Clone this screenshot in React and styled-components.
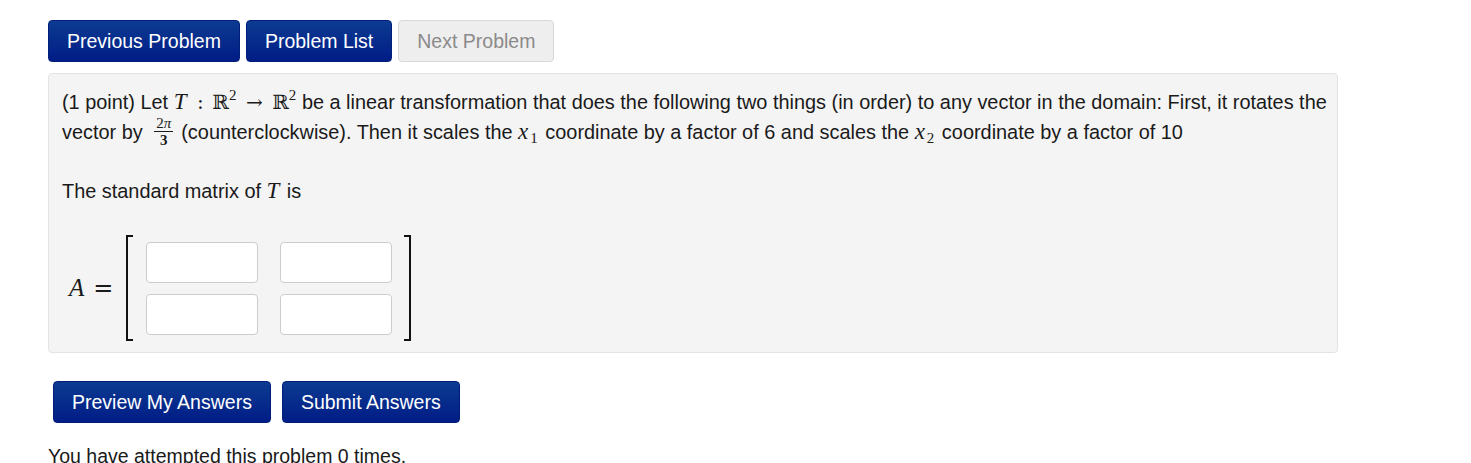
import styled, { createGlobalStyle, css } from 'styled-components'

const GlobalStyle = createGlobalStyle`
  body {
    margin: 0;
    background: #fff;
    font-family: 'Liberation Sans', Arial, sans-serif;
    color: #1a1a1a;
  }
`

const Page = styled.div`
  padding: 20px 0 0 48px;
  height: 463px;
  box-sizing: border-box;
  overflow: hidden;
`

const NavBar = styled.div`
  display: flex;
  gap: 6px;
  margin-bottom: 11px;
`

const Button = styled.button`
  height: 42px;
  padding: 0 18px;
  border-radius: 4px;
  font-family: 'Liberation Sans', Arial, sans-serif;
  font-size: 19.5px;
  border: 1px solid #001f7a;
  color: #fff;
  background: linear-gradient(to bottom, #0c3b91, #011c86);
  cursor: pointer;

  ${(p) =>
    p.disabled &&
    css`
      background: #eeeeee;
      border-color: #d8d8d8;
      color: #8a8a8a;
      cursor: default;
    `}
`

const ProblemBox = styled.div`
  width: 1290px;
  box-sizing: border-box;
  background: #f4f4f4;
  border: 1px solid #e3e3e3;
  border-radius: 4px;
  padding: 13px 14px 11px 13px;
  font-size: 19.9px;
  line-height: 30px;
`

const Para = styled.p`
  margin: 0 0 29px;
  white-space: nowrap;
`

const MathI = styled.span`
  font-family: 'Liberation Serif', 'DejaVu Serif', serif;
  font-style: italic;
  font-size: 23px;
  margin-right: 2px;
`

const MathR = styled.span`
  font-family: 'DejaVu Serif', 'Liberation Serif', serif;
  font-size: 20px;
  margin: 0 ${(p) => p.$space || 0}px;
`

const Sup = styled.sup`
  font-family: 'Liberation Serif', serif;
  font-size: 15px;
  vertical-align: 9px;
  line-height: 0;
`

const Sub = styled.sub`
  font-family: 'Liberation Serif', serif;
  font-size: 15px;
  vertical-align: -4px;
  line-height: 0;
  margin-right: 2px;
`

const Frac = styled.span`
  display: inline-flex;
  flex-direction: column;
  align-items: center;
  vertical-align: middle;
  font-family: 'Liberation Serif', serif;
  font-size: 15px;
  line-height: 13px;
  margin: -4px 8px 0 6px;

  span:first-child {
    border-bottom: 1px solid #1a1a1a;
    padding: 0 2px 1px;
  }
  span:last-child {
    padding-top: 2px;
    font-weight: bold;
  }
`

const MatrixRow = styled.div`
  display: flex;
  align-items: center;
  margin: 0 0 0 7px;
  height: 106px;
`

const Lhs = styled.div`
  display: flex;
  align-items: center;
  font-family: 'Liberation Serif', serif;
  font-size: 25px;
  margin-right: 13px;
  white-space: nowrap;

  i {
    margin-right: 9px;
  }
`

const Equals = styled.span`
  font-family: 'DejaVu Serif', serif;
  font-size: 24px;
`

const Bracket = styled.div`
  width: 5px;
  height: 102px;
  border: 2px solid #111;
  ${(p) => (p.$side === 'left' ? 'border-right: none;' : 'border-left: none;')}
`

const Grid = styled.div`
  display: grid;
  grid-template-columns: 112px 112px;
  column-gap: 22px;
  row-gap: 11px;
  margin: 0 12px 0 13px;
`

const Cell = styled.input`
  height: 41px;
  box-sizing: border-box;
  border: 1px solid #cccccc;
  border-radius: 4px;
  background: #fff;
  font-size: 16px;
`

const SubmitBar = styled.div`
  display: flex;
  gap: 11px;
  margin: 28px 0 0 5px;
`

const Attempts = styled.p`
  margin: 22px 0 0;
  font-size: 19.5px;
`

export default function App() {
  return (
    <>
      <GlobalStyle />
      <Page>
        <NavBar>
          <Button>Previous Problem</Button>
          <Button>Problem List</Button>
          <Button disabled>Next Problem</Button>
        </NavBar>
        <ProblemBox>
          <Para>
            (1 point) Let <MathI>T</MathI> <MathR $space={3}>:</MathR>{' '}
            <MathR>ℝ</MathR>
            <Sup>2</Sup> <MathR $space={4}>→</MathR> <MathR>ℝ</MathR>
            <Sup>2</Sup> be a linear transformation that does the following two
            things (in order) to any vector in the domain: First, it rotates the
            <br />
            vector by{' '}
            <Frac>
              <span>
                2<i>π</i>
              </span>
              <span>3</span>
            </Frac>
            (counterclockwise). Then it scales the <MathI>x</MathI>
            <Sub>1</Sub> coordinate by a factor of 6 and scales the{' '}
            <MathI>x</MathI>
            <Sub>2</Sub> coordinate by a factor of 10
          </Para>
          <Para>
            The standard matrix of <MathI>T</MathI> is
          </Para>
          <MatrixRow>
            <Lhs>
              <i>A</i>
              <Equals>=</Equals>
            </Lhs>
            <Bracket $side="left" />
            <Grid>
              <Cell aria-label="a11" />
              <Cell aria-label="a12" />
              <Cell aria-label="a21" />
              <Cell aria-label="a22" />
            </Grid>
            <Bracket $side="right" />
          </MatrixRow>
        </ProblemBox>
        <SubmitBar>
          <Button>Preview My Answers</Button>
          <Button>Submit Answers</Button>
        </SubmitBar>
        <Attempts>You have attempted this problem 0 times.</Attempts>
      </Page>
    </>
  )
}
